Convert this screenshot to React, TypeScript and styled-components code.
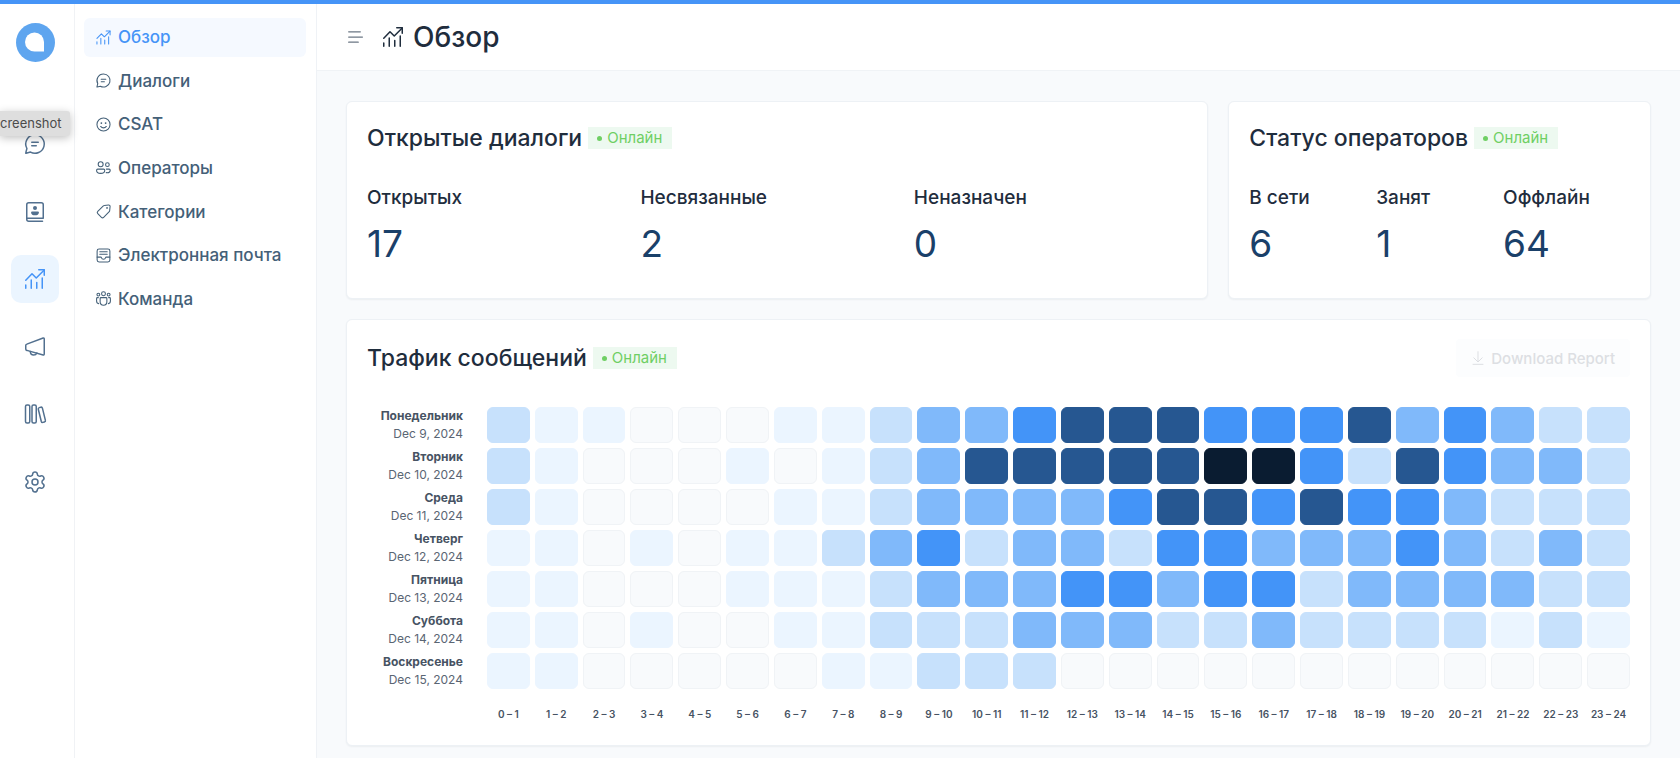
import React from 'react';
import styled, { createGlobalStyle } from 'styled-components';
import { Settings } from 'lucide-react';

const GlobalStyle = createGlobalStyle`
  * { box-sizing: border-box; }
  body {
    margin: 0;
    background: #f8fafc;
    color: #1f2d3d;
    font-family: Inter, "Liberation Sans", sans-serif;
    -webkit-font-smoothing: antialiased;
  }
  h1, h2, p, dl, dd, ul { margin: 0; padding: 0; }
  button { font: inherit; }
`;

/* ---------- icons ---------- */

const Svg = styled.svg.attrs({
  viewBox: '0 0 24 24',
  fill: 'none',
  stroke: 'currentColor',
  strokeWidth: 1.5,
  strokeLinecap: 'round',
  strokeLinejoin: 'round',
  'aria-hidden': true,
})<{ $size: number }>`
  width: ${(p) => p.$size}px;
  height: ${(p) => p.$size}px;
  flex: none;
`;

type IconProps = { size: number };

const ChatIcon = ({ size }: IconProps) => (
  <Svg $size={size}>
    <path d="M12 2.75a9.25 9.25 0 1 1-4.5 17.33l-4.4 1.2a.3.3 0 0 1-.38-.38l1.2-4.4A9.25 9.25 0 0 1 12 2.75Z" />
    <path d="M8.75 10.25h6.5M8.75 13.75h4.5" />
  </Svg>
);

const TrendIcon = ({ size }: IconProps) => (
  <Svg $size={size}>
    <path d="M2.75 13.25 9 6.75l4.25 4.25 8-8" />
    <path d="M15.75 2.75h5.5v5.5" />
    <path d="M2.75 18v3.25M8.25 13v8.25M13.75 15.5v5.75M19.25 11v10.25" />
  </Svg>
);

const SmileIcon = ({ size }: IconProps) => (
  <Svg $size={size}>
    <circle cx="12" cy="12" r="9.25" />
    <path d="M8 14.75c1 1.3 2.4 2 4 2s3-.7 4-2" />
    <circle cx="9" cy="10" r="1.25" fill="currentColor" stroke="none" />
    <circle cx="15" cy="10" r="1.25" fill="currentColor" stroke="none" />
  </Svg>
);

const PeopleIcon = ({ size }: IconProps) => (
  <Svg $size={size}>
    <circle cx="8" cy="7.5" r="3.5" />
    <circle cx="17.5" cy="8" r="2.6" />
    <path d="M3.75 14.25h8.5c.8 0 1.5.7 1.5 1.5v.5c0 2.5-2.4 4-5.75 4s-5.75-1.5-5.75-4v-.5c0-.8.7-1.5 1.5-1.5Z" />
    <path d="M16 14.25h4c.8 0 1.5.7 1.5 1.5 0 2.4-1.7 3.6-4.3 3.6-.5 0-1 0-1.4-.1" />
  </Svg>
);

const TagIcon = ({ size }: IconProps) => (
  <Svg $size={size}>
    <path d="m13.1 3.4 6-.65a2 2 0 0 1 2.2 2.2l-.6 6a2 2 0 0 1-.6 1.3l-7.9 7.9a2.2 2.2 0 0 1-3.1 0l-5.2-5.2a2.2 2.2 0 0 1 0-3.1L11.8 4a2 2 0 0 1 1.3-.6Z" />
    <circle cx="17" cy="7" r="1.2" fill="currentColor" stroke="none" />
  </Svg>
);

const InboxIcon = ({ size }: IconProps) => (
  <Svg $size={size}>
    <rect x="3" y="2.75" width="18" height="18.5" rx="2.75" />
    <path d="M3 14.25h5.2c.5 0 .75.4.85.75.35 1.3 1.4 2.25 2.95 2.25s2.6-.95 2.95-2.25c.1-.35.35-.75.85-.75H21M6.75 6.75h10.5M6.75 10.25h10.5" />
  </Svg>
);

const TeamIcon = ({ size }: IconProps) => (
  <Svg $size={size}>
    <circle cx="12" cy="5.25" r="2.75" />
    <circle cx="4.75" cy="6.5" r="2" />
    <circle cx="19.25" cy="6.5" r="2" />
    <path d="M8.5 10.75h7c.7 0 1.25.55 1.25 1.25v4.75a4.75 4.75 0 0 1-9.5 0V12c0-.7.55-1.25 1.25-1.25Z" />
    <path d="M4.75 10.75H3.5c-.7 0-1.25.55-1.25 1.25v3.5c0 2 1.1 3.5 2.9 3.75M19.25 10.75h1.25c.7 0 1.25.55 1.25 1.25v3.5c0 2-1.1 3.5-2.9 3.75" />
  </Svg>
);

const ContactsIcon = ({ size }: IconProps) => (
  <Svg $size={size}>
    <path d="M20.25 18.25H3.75V4.75c0-1.1.9-2 2-2h12.5c1.1 0 2 .9 2 2v13.5ZM3.75 18.25v1c0 1.1.9 2 2 2h13.75" />
    <circle cx="12" cy="8" r="2" fill="currentColor" stroke="none" />
    <path
      d="M9 11.5h6c.5 0 .9.4.9.9 0 1.9-1.7 2.9-3.9 2.9s-3.9-1-3.9-2.9c0-.5.4-.9.9-.9Z"
      fill="currentColor"
      stroke="none"
    />
  </Svg>
);

const MegaphoneIcon = ({ size }: IconProps) => (
  <Svg $size={size}>
    <path d="M21.25 3.9v15.2c0 .6-.55 1-1.1.85L3.9 15.4a1.5 1.5 0 0 1-1.15-1.45v-3.4c0-.65.45-1.25 1.1-1.45l16.3-6.05c.55-.15 1.1.25 1.1.85Z" />
    <path d="M7.25 16.5c.1 2.1 1.6 3.5 3.4 3.5 1.5 0 2.7-.8 3.2-2.1" />
  </Svg>
);

const LibraryIcon = ({ size }: IconProps) => (
  <Svg $size={size}>
    <rect x="2.5" y="3" width="4.25" height="18" rx="1.5" />
    <rect x="9" y="3" width="4.25" height="18" rx="1.5" />
    <path d="m16.3 5.6 1.5-.4c.7-.2 1.4.2 1.6.9l3 12.3c.2.7-.3 1.4-1 1.6l-1.5.4c-.7.2-1.4-.2-1.6-.9l-3-12.3c-.2-.7.3-1.4 1-1.6Z" />
  </Svg>
);

const MenuIcon = ({ size }: IconProps) => (
  <Svg $size={size}>
    <path d="M2 5.75h14M2 12h16.5M2 18.25h11.5" />
  </Svg>
);

const DownloadIcon = ({ size }: IconProps) => (
  <Svg $size={size}>
    <path d="M12 2.5v15M5.75 11.75 12 18l6.25-6.25M4.5 21.5h15" />
  </Svg>
);

/* ---------- shell ---------- */

const Page = styled.div`
  position: relative;
  display: flex;
  min-height: 100vh;
  overflow: hidden;
  border-top: 4px solid #4594f7;
`;

const Rail = styled.nav`
  flex: none;
  display: flex;
  flex-direction: column;
  align-items: center;
  width: 75px;
  padding-top: 19px;
  background: #fff;
  border-right: 1px solid #f0f2f5;
`;

const Logo = styled.svg`
  width: 39px;
  height: 39px;
`;

const RailList = styled.ul`
  display: flex;
  flex-direction: column;
  justify-content: space-between;
  min-height: 386px;
  margin-top: 58px;
  list-style: none;
`;

const RailLink = styled.a<{ $active?: boolean }>`
  display: flex;
  align-items: center;
  justify-content: center;
  width: 48px;
  height: 48px;
  margin-right: 4px;
  border-radius: 10px;
  color: ${(p) => (p.$active ? '#4594f7' : '#52708f')};
  background: ${(p) => (p.$active ? '#ebf5ff' : 'transparent')};
`;

const LogoLink = styled.a`
  display: flex;
  margin-right: 4px;
`;

const Sidebar = styled.nav`
  flex: none;
  width: 242px;
  padding: 14px 10px 14px 9px;
  background: #fff;
  border-right: 1px solid #eff2f6;
`;

const SideList = styled.ul`
  display: grid;
  grid-auto-rows: 1fr;
  gap: 5px;
  min-height: 300px;
  list-style: none;
`;

const SideLink = styled.a<{ $active?: boolean }>`
  display: flex;
  align-items: center;
  gap: 6px;
  height: 100%;
  padding: 0 11px;
  border-radius: 6px;
  font-size: 17px;
  font-weight: 500;
  line-height: 24px;
  white-space: nowrap;
  text-decoration: none;
  color: ${(p) => (p.$active ? '#4594f7' : '#446078')};
  background: ${(p) => (p.$active ? '#f5f9ff' : 'transparent')};
`;

const HintTag = styled.div`
  position: absolute;
  top: 107px;
  left: 0;
  width: 70px;
  padding: 0 9px 0 0;
  border-radius: 0 3px 3px 0;
  background: #dedede;
  box-shadow: 0 2px 8px rgba(0, 0, 0, 0.25);
  color: #4b4b4b;
  font-size: 13px;
  line-height: 25px;
  text-align: right;
`;

const Main = styled.main`
  flex: 1;
  min-width: 0;
  display: flex;
  flex-direction: column;
`;

const Header = styled.header`
  display: flex;
  align-items: center;
  height: 67px;
  padding: 0 30px;
  background: #fff;
  border-bottom: 1px solid #f0f3f6;
`;

const MenuButton = styled.button`
  display: flex;
  margin-right: 14px;
  padding: 0;
  border: 0;
  background: none;
  color: #6b7784;
`;

const PageTitle = styled.h1`
  margin-left: 8px;
  font-size: 28px;
  font-weight: 500;
  line-height: 36px;
`;

const Content = styled.div`
  display: grid;
  gap: 20px;
  padding: 30px 29px 12px;
`;

const TopRow = styled.div`
  display: grid;
  grid-template-columns: 204fr 100fr;
  gap: 20px;
`;

const Card = styled.section`
  padding: 19px 20px;
  background: #fff;
  border: 1px solid #edf1f5;
  border-radius: 6px;
  box-shadow: 0 1px 2px rgba(31, 45, 61, 0.06);
`;

const CardHead = styled.div`
  display: flex;
  align-items: center;
  min-height: 34px;
`;

const CardTitle = styled.h2`
  font-size: 23px;
  font-weight: 500;
  line-height: 32px;
  white-space: nowrap;
`;

const Live = styled.span`
  display: flex;
  align-items: center;
  gap: 5px;
  height: 22px;
  margin-left: 6px;
  padding: 0 10px 0 9px;
  background: #edf9f0;
  color: #6fcf64;
  font-size: 15px;
  line-height: 22px;

  &::before {
    content: '';
    width: 5px;
    height: 5px;
    border-radius: 50%;
    background: currentColor;
  }
`;

const Metrics = styled.dl`
  display: grid;
  grid-template-columns: repeat(3, 1fr);
  padding: 29px 0 13px;
`;

const MetricLabel = styled.dt`
  font-size: 19px;
  font-weight: 500;
  line-height: 28px;
  white-space: nowrap;
`;

const MetricValue = styled.dd`
  padding-top: 10px;
  color: #1a4069;
  font-size: 37px;
  line-height: 44px;
`;

const DownloadButton = styled.button`
  display: flex;
  align-items: center;
  gap: 5px;
  height: 38px;
  margin-left: auto;
  padding: 0 15px 0 14px;
  border: 0;
  border-radius: 4px;
  background: #fcfdfe;
  color: #dddfe3;
  font-size: 15px;
  font-weight: 500;
`;

/* ---------- heat map ---------- */

const HeatTable = styled.table`
  display: block;
  padding-top: 30px;
`;

const HeatBody = styled.tbody`
  display: grid;
  gap: 5px;
`;

const HeatRow = styled.tr`
  display: grid;
  grid-template-columns: 115px repeat(24, minmax(0, 1fr));
  column-gap: 5px;
`;

const DayHead = styled.th`
  padding: 0 19px 0 0;
  color: #475363;
  font-size: 12px;
  font-weight: 700;
  line-height: 18px;
  text-align: right;
  white-space: nowrap;
`;

const DayDate = styled.span`
  display: block;
  font-weight: 400;
  color: #5a6573;
`;

const levels = ['#f8fafc', '#ebf5ff', '#c7e1fc', '#80b9fa', '#4394f8', '#265791', '#0a1c31'];

const HeatCell = styled.td<{ $level: number }>`
  height: 36px;
  padding: 0;
  border: 1px solid ${(p) => (p.$level === 0 ? '#f0f3f6' : levels[p.$level])};
  border-radius: 6px;
  background: ${(p) => levels[p.$level]};
`;

const HourFoot = styled.tfoot`
  display: block;
  padding: 17px 0 4px;
`;

const HourLabel = styled.th`
  padding: 0;
  color: #475363;
  font-size: 10px;
  font-weight: 600;
  line-height: 16px;
  text-align: center;
  white-space: nowrap;
`;

const days: [string, string, string][] = [
  ['Понедельник', 'Dec 9, 2024', '211000112334555444534322'],
  ['Вторник', 'Dec 10, 2024', '210001012355555664254332'],
  ['Среда', 'Dec 11, 2024', '210000112333345545443222'],
  ['Четверг', 'Dec 12, 2024', '110101123423324433343232'],
  ['Пятница', 'Dec 13, 2024', '110001112333443442333322'],
  ['Суббота', 'Dec 14, 2024', '110100112223332232222121'],
  ['Воскресенье', 'Dec 15, 2024', '110000011222000000000000'],
];

const hours = Array.from({ length: 24 }, (_, h) => `${h} – ${h + 1}`);

const sideItems = [
  { label: 'Обзор', Icon: TrendIcon },
  { label: 'Диалоги', Icon: ChatIcon },
  { label: 'CSAT', Icon: SmileIcon },
  { label: 'Операторы', Icon: PeopleIcon },
  { label: 'Категории', Icon: TagIcon },
  { label: 'Электронная почта', Icon: InboxIcon },
  { label: 'Команда', Icon: TeamIcon },
];

const GearIcon = ({ size }: IconProps) => <Settings size={size} strokeWidth={1.5} />;

const railItems = [
  { label: 'Диалоги', Icon: ChatIcon },
  { label: 'Контакты', Icon: ContactsIcon },
  { label: 'Отчёты', Icon: TrendIcon },
  { label: 'Кампании', Icon: MegaphoneIcon },
  { label: 'Справочный центр', Icon: LibraryIcon },
  { label: 'Настройки', Icon: GearIcon },
];

type Metric = [label: string, value: number];

const MetricCard = ({ title, items }: { title: string; items: Metric[] }) => (
  <Card>
    <CardHead>
      <CardTitle>{title}</CardTitle>
      <Live>Онлайн</Live>
    </CardHead>
    <Metrics>
      {items.map(([label, value]) => (
        <div key={label}>
          <MetricLabel>{label}</MetricLabel>
          <MetricValue>{value}</MetricValue>
        </div>
      ))}
    </Metrics>
  </Card>
);

export default function App() {
  return (
    <>
      <GlobalStyle />
      <Page>
        <Rail>
          <LogoLink href="#" aria-label="Chatwoot">
            <Logo viewBox="0 0 39 39">
              <circle cx="19.5" cy="19.5" r="19.5" fill="#5ea5ef" />
              <path d="M28 28.5h-9.5a9.5 9.5 0 1 1 9.5-9.5Z" fill="#fff" />
            </Logo>
          </LogoLink>
          <RailList>
            {railItems.map(({ label, Icon }) => (
              <li key={label}>
                <RailLink href="#" aria-label={label} $active={Icon === TrendIcon}>
                  <Icon size={24} />
                </RailLink>
              </li>
            ))}
          </RailList>
        </Rail>
        <Sidebar>
          <SideList>
            {sideItems.map(({ label, Icon }, i) => (
              <li key={label}>
                <SideLink href="#" $active={i === 0}>
                  <Icon size={17} />
                  {label}
                </SideLink>
              </li>
            ))}
          </SideList>
        </Sidebar>
        <Main>
          <Header>
            <MenuButton type="button" aria-label="Меню">
              <MenuIcon size={20} />
            </MenuButton>
            <TrendIcon size={24} />
            <PageTitle>Обзор</PageTitle>
          </Header>
          <Content>
            <TopRow>
              <MetricCard
                title="Открытые диалоги"
                items={[['Открытых', 17], ['Несвязанные', 2], ['Неназначен', 0]]}
              />
              <MetricCard
                title="Статус операторов"
                items={[['В сети', 6], ['Занят', 1], ['Оффлайн', 64]]}
              />
            </TopRow>
            <Card>
              <CardHead>
                <CardTitle>Трафик сообщений</CardTitle>
                <Live>Онлайн</Live>
                <DownloadButton type="button" disabled>
                  <DownloadIcon size={16} />
                  Download Report
                </DownloadButton>
              </CardHead>
              <HeatTable>
                <HeatBody>
                  {days.map(([day, date, cells]) => (
                    <HeatRow key={day}>
                      <DayHead scope="row">
                        {day}
                        <DayDate>{date}</DayDate>
                      </DayHead>
                      {cells.split('').map((c, i) => (
                        <HeatCell key={i} $level={Number(c)} />
                      ))}
                    </HeatRow>
                  ))}
                </HeatBody>
                <HourFoot>
                  <HeatRow>
                    <td />
                    {hours.map((h) => (
                      <HourLabel key={h} scope="col">{h}</HourLabel>
                    ))}
                  </HeatRow>
                </HourFoot>
              </HeatTable>
            </Card>
          </Content>
        </Main>
        <HintTag>creenshot</HintTag>
      </Page>
    </>
  );
}
